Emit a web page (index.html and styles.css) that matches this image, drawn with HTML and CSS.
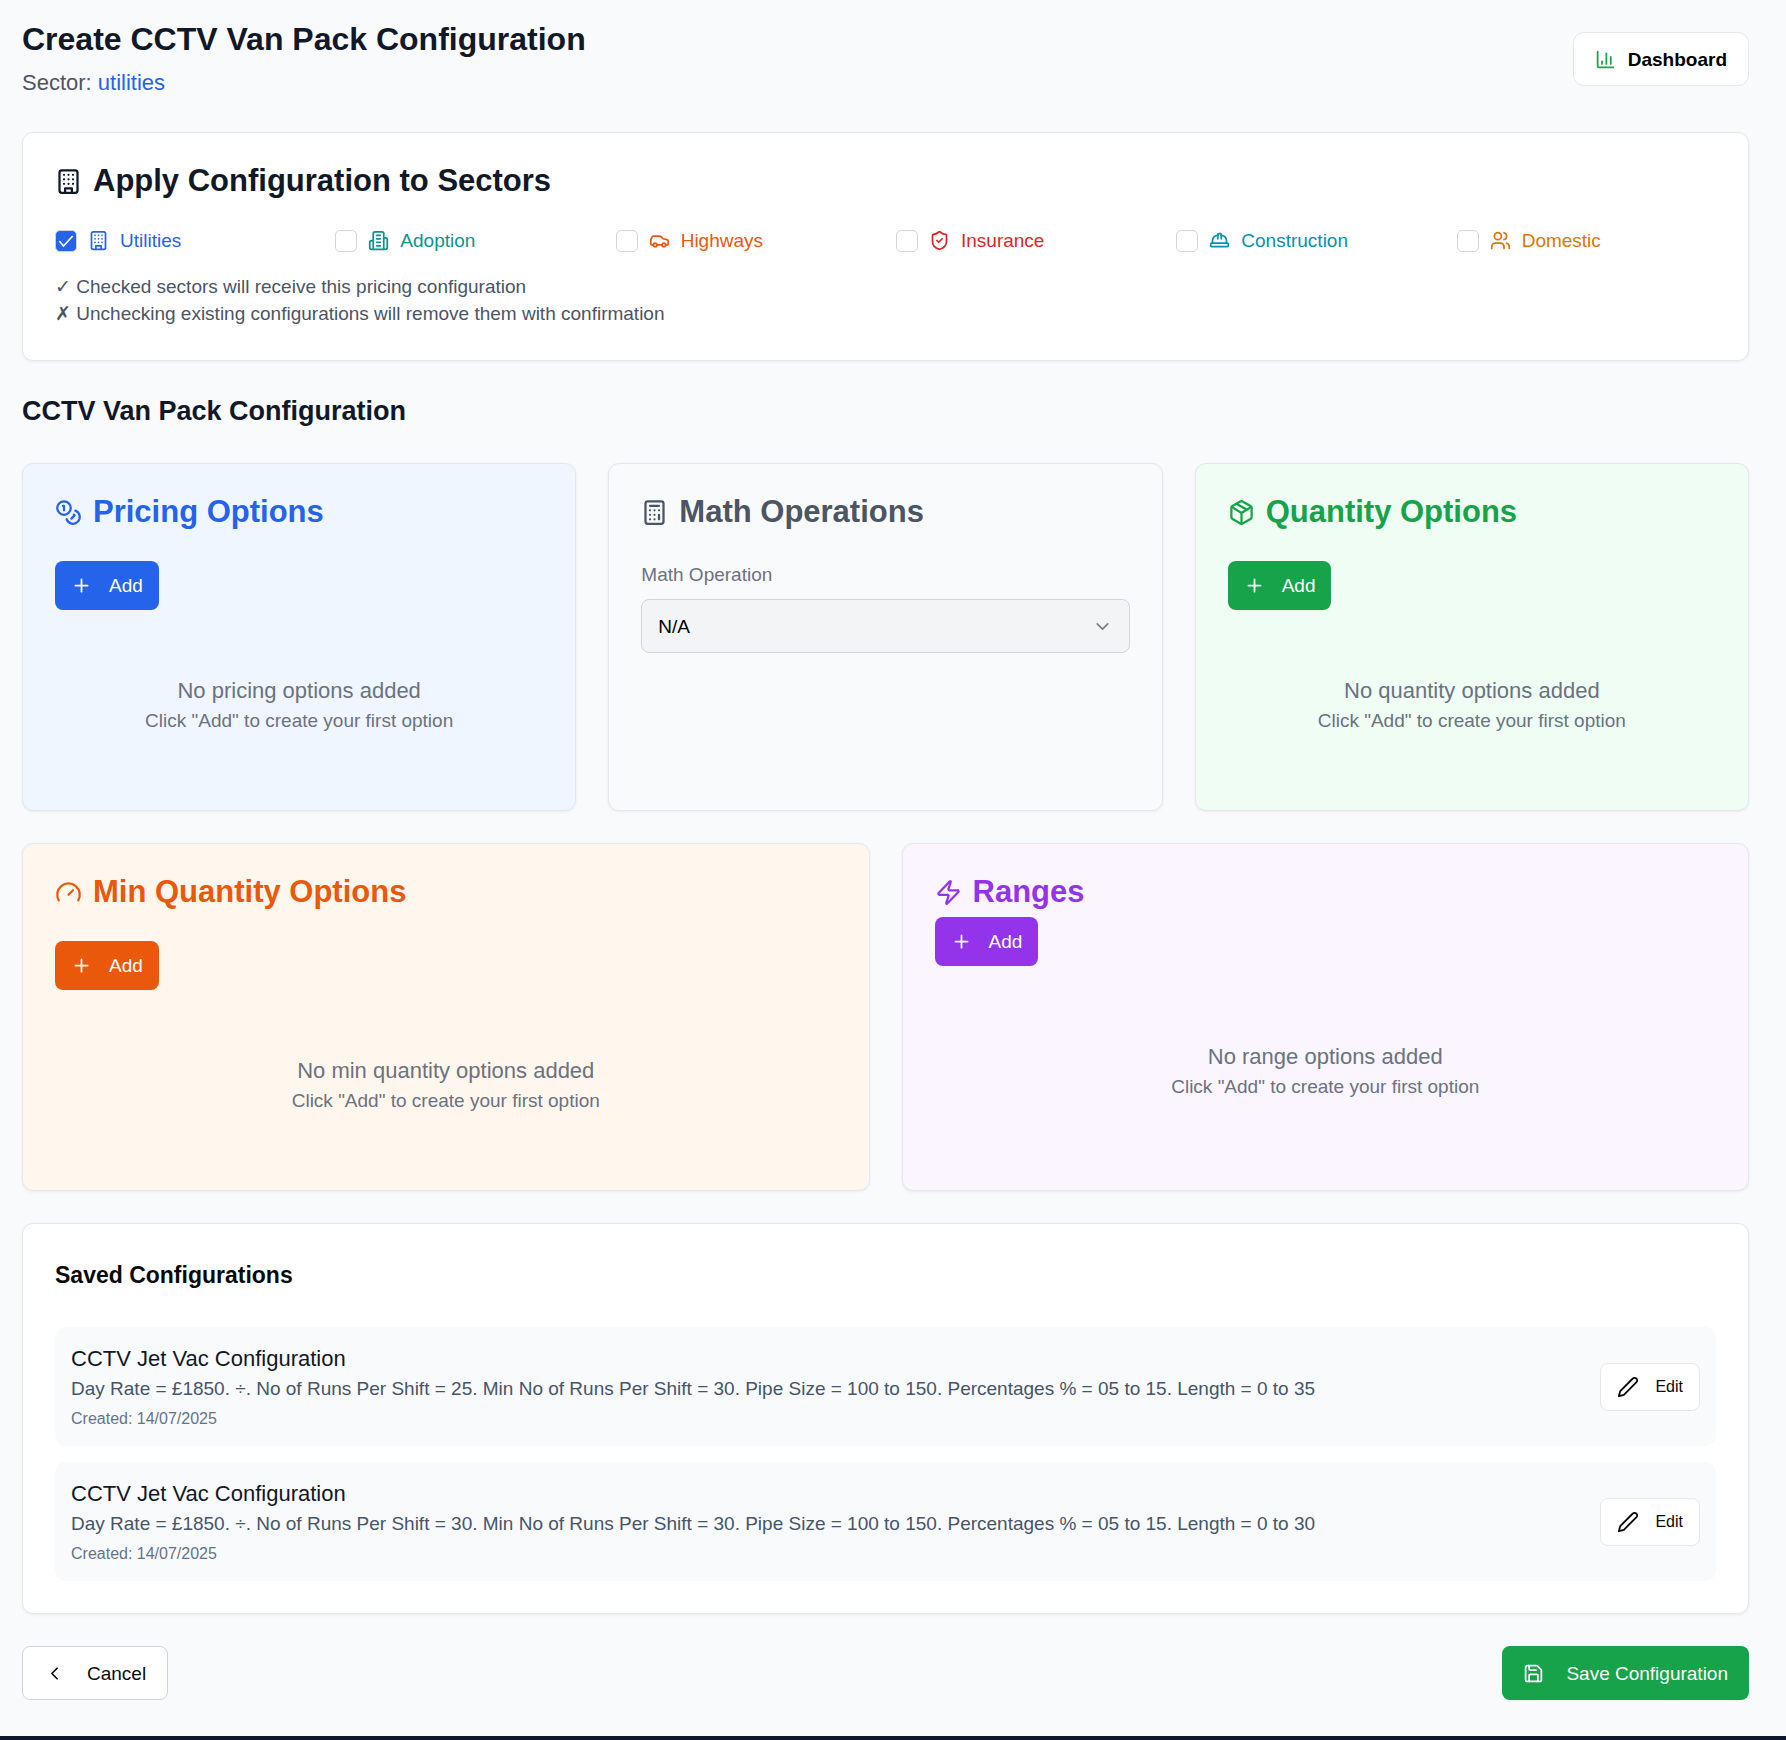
FILE: index.html
```html
<!DOCTYPE html>
<html lang="en">
<head>
<meta charset="utf-8">
<meta name="viewport" content="width=device-width, initial-scale=1">
<title>Create CCTV Van Pack Configuration</title>
<link rel="stylesheet" href="styles.css">
</head>
<body>
<main class="page">
  <header class="page-header">
    <div>
      <h1 class="page-title">Create CCTV Van Pack Configuration</h1>
      <p class="page-sector">Sector: <span class="accent">utilities</span></p>
    </div>
    <button type="button" class="btn btn-dashboard">
      <svg class="icon green" viewBox="0 0 24 24"><path d="M3 3v16a2 2 0 0 0 2 2h16"/><path d="M18 17V9"/><path d="M13 17V5"/><path d="M8 17v-3"/></svg>
      Dashboard
    </button>
  </header>

  <section class="card">
    <h2 class="card-title">
      <svg class="icon icon-lg" viewBox="0 0 24 24"><rect width="16" height="20" x="4" y="2" rx="2"/><path d="M9 22v-4h6v4"/><path d="M8 6h.01M16 6h.01M12 6h.01M12 10h.01M12 14h.01M16 10h.01M16 14h.01M8 10h.01M8 14h.01"/></svg>
      Apply Configuration to Sectors
    </h2>
    <div class="sectors">
      <label class="sector blue">
        <span class="check"><input type="checkbox" checked><svg class="tick" viewBox="0 0 24 24"><path d="M4 12l5 6L20 6"/></svg></span>
        <svg class="icon" viewBox="0 0 24 24"><rect width="16" height="20" x="4" y="2" rx="2"/><path d="M9 22v-4h6v4"/><path d="M8 6h.01M16 6h.01M12 6h.01M12 10h.01M12 14h.01M16 10h.01M16 14h.01M8 10h.01M8 14h.01"/></svg>
        <span>Utilities</span>
      </label>
      <label class="sector teal">
        <span class="check"><input type="checkbox"></span>
        <svg class="icon" viewBox="0 0 24 24"><path d="M6 22V4a2 2 0 0 1 2-2h8a2 2 0 0 1 2 2v18Z"/><path d="M6 12H4a2 2 0 0 0-2 2v6a2 2 0 0 0 2 2h2"/><path d="M18 9h2a2 2 0 0 1 2 2v9a2 2 0 0 1-2 2h-2"/><path d="M10 6h4M10 10h4M10 14h4M10 18h4"/></svg>
        <span>Adoption</span>
      </label>
      <label class="sector orange">
        <span class="check"><input type="checkbox"></span>
        <svg class="icon" viewBox="0 0 24 24"><path d="M19 17h2c.6 0 1-.4 1-1v-3c0-.9-.7-1.7-1.5-1.9C18.7 10.6 16 10 16 10s-1.3-1.4-2.2-2.3c-.5-.4-1.1-.7-1.8-.7H5c-.6 0-1.1.4-1.4.9l-1.4 2.9A3.7 3.7 0 0 0 2 12v4c0 .6.4 1 1 1h2"/><circle cx="7" cy="17" r="2"/><path d="M9 17h6"/><circle cx="17" cy="17" r="2"/></svg>
        <span>Highways</span>
      </label>
      <label class="sector red">
        <span class="check"><input type="checkbox"></span>
        <svg class="icon" viewBox="0 0 24 24"><path d="M20 13c0 5-3.5 7.5-7.66 8.95a1 1 0 0 1-.67-.01C7.5 20.5 4 18 4 13V6a1 1 0 0 1 1-1c2 0 4.5-1.2 6.24-2.72a1.17 1.17 0 0 1 1.52 0C14.51 3.81 17 5 19 5a1 1 0 0 1 1 1z"/><path d="m9 12 2 2 4-4"/></svg>
        <span>Insurance</span>
      </label>
      <label class="sector cyan">
        <span class="check"><input type="checkbox"></span>
        <svg class="icon" viewBox="0 0 24 24"><path d="M2 18a1 1 0 0 0 1 1h18a1 1 0 0 0 1-1v-2a1 1 0 0 0-1-1H3a1 1 0 0 0-1 1v2z"/><path d="M10 10V5a1 1 0 0 1 1-1h2a1 1 0 0 1 1 1v5"/><path d="M4 15v-3a6 6 0 0 1 6-6"/><path d="M14 6a6 6 0 0 1 6 6v3"/></svg>
        <span>Construction</span>
      </label>
      <label class="sector amber">
        <span class="check"><input type="checkbox"></span>
        <svg class="icon" viewBox="0 0 24 24"><path d="M16 21v-2a4 4 0 0 0-4-4H6a4 4 0 0 0-4 4v2"/><circle cx="9" cy="7" r="4"/><path d="M22 21v-2a4 4 0 0 0-3-3.87"/><path d="M16 3.13a4 4 0 0 1 0 7.75"/></svg>
        <span>Domestic</span>
      </label>
    </div>
    <div class="notes">
      <p>✓ Checked sectors will receive this pricing configuration</p>
      <p>✗ Unchecking existing configurations will remove them with confirmation</p>
    </div>
  </section>

  <h2 class="section-title">CCTV Van Pack Configuration</h2>

  <div class="grid grid-3">
    <section class="card card-blue">
      <h3 class="card-title blue">
        <svg class="icon icon-lg" viewBox="0 0 24 24"><circle cx="8" cy="8" r="6"/><path d="M18.09 10.37A6 6 0 1 1 10.34 18"/><path d="M7 6h1v4"/><path d="m16.71 13.88.7.71-2.82 2.82"/></svg>
        Pricing Options
      </h3>
      <button type="button" class="btn btn-add bg-blue"><svg class="icon" viewBox="0 0 24 24"><path d="M5 12h14M12 5v14"/></svg>Add</button>
      <div class="empty">
        <p class="empty-title">No pricing options added</p>
        <p class="empty-hint">Click "Add" to create your first option</p>
      </div>
    </section>

    <section class="card card-gray">
      <h3 class="card-title slate">
        <svg class="icon icon-lg" viewBox="0 0 24 24"><rect width="16" height="20" x="4" y="2" rx="2"/><path d="M8 6h8M16 14v4M16 10h.01M12 10h.01M8 10h.01M12 14h.01M8 14h.01M12 18h.01M8 18h.01"/></svg>
        Math Operations
      </h3>
      <label class="field-label" for="math-operation">Math Operation</label>
      <div class="select">
        <select id="math-operation"><option>N/A</option></select>
        <svg class="icon select-arrow" viewBox="0 0 24 24"><path d="m6 9 6 6 6-6"/></svg>
      </div>
    </section>

    <section class="card card-green">
      <h3 class="card-title green">
        <svg class="icon icon-lg" viewBox="0 0 24 24"><path d="M11 21.73a2 2 0 0 0 2 0l7-4A2 2 0 0 0 21 16V8a2 2 0 0 0-1-1.73l-7-4a2 2 0 0 0-2 0l-7 4A2 2 0 0 0 3 8v8a2 2 0 0 0 1 1.73z"/><path d="M12 22V12"/><path d="m3.3 7 7.703 4.734a2 2 0 0 0 1.994 0L20.7 7"/><path d="m7.5 4.27 9 5.15"/></svg>
        Quantity Options
      </h3>
      <button type="button" class="btn btn-add bg-green"><svg class="icon" viewBox="0 0 24 24"><path d="M5 12h14M12 5v14"/></svg>Add</button>
      <div class="empty">
        <p class="empty-title">No quantity options added</p>
        <p class="empty-hint">Click "Add" to create your first option</p>
      </div>
    </section>
  </div>

  <div class="grid grid-2">
    <section class="card card-orange">
      <h3 class="card-title orange">
        <svg class="icon icon-lg" viewBox="0 0 24 24"><path d="m12 14 4-4"/><path d="M3.34 19a10 10 0 1 1 17.32 0"/></svg>
        Min Quantity Options
      </h3>
      <button type="button" class="btn btn-add bg-orange"><svg class="icon" viewBox="0 0 24 24"><path d="M5 12h14M12 5v14"/></svg>Add</button>
      <div class="empty">
        <p class="empty-title">No min quantity options added</p>
        <p class="empty-hint">Click "Add" to create your first option</p>
      </div>
    </section>

    <section class="card card-purple card-compact">
      <h3 class="card-title purple">
        <svg class="icon icon-lg" viewBox="0 0 24 24"><path d="M4 14a1 1 0 0 1-.78-1.63l9.9-10.2a.5.5 0 0 1 .86.46l-1.92 6.02A1 1 0 0 0 13 10h7a1 1 0 0 1 .78 1.63l-9.9 10.2a.5.5 0 0 1-.86-.46l1.92-6.02A1 1 0 0 0 11 14z"/></svg>
        Ranges
      </h3>
      <button type="button" class="btn btn-add bg-purple"><svg class="icon" viewBox="0 0 24 24"><path d="M5 12h14M12 5v14"/></svg>Add</button>
      <div class="empty">
        <p class="empty-title">No range options added</p>
        <p class="empty-hint">Click "Add" to create your first option</p>
      </div>
    </section>
  </div>

  <section class="card">
    <h2 class="saved-title">Saved Configurations</h2>
    <ul class="saved-list">
      <li class="saved-item">
        <div>
          <h3 class="saved-name">CCTV Jet Vac Configuration</h3>
          <p class="saved-detail">Day Rate = £1850. ÷. No of Runs Per Shift = 25. Min No of Runs Per Shift = 30. Pipe Size = 100 to 150. Percentages % = 05 to 15. Length = 0 to 35</p>
          <p class="saved-date">Created: 14/07/2025</p>
        </div>
        <button type="button" class="btn btn-edit"><svg class="icon" viewBox="0 0 24 24"><path d="M17 3a2.85 2.83 0 1 1 4 4L7.5 20.5 2 22l1.5-5.5Z"/></svg>Edit</button>
      </li>
      <li class="saved-item">
        <div>
          <h3 class="saved-name">CCTV Jet Vac Configuration</h3>
          <p class="saved-detail">Day Rate = £1850. ÷. No of Runs Per Shift = 30. Min No of Runs Per Shift = 30. Pipe Size = 100 to 150. Percentages % = 05 to 15. Length = 0 to 30</p>
          <p class="saved-date">Created: 14/07/2025</p>
        </div>
        <button type="button" class="btn btn-edit"><svg class="icon" viewBox="0 0 24 24"><path d="M17 3a2.85 2.83 0 1 1 4 4L7.5 20.5 2 22l1.5-5.5Z"/></svg>Edit</button>
      </li>
    </ul>
  </section>

  <div class="actions">
    <button type="button" class="btn btn-cancel"><svg class="icon" viewBox="0 0 24 24"><path d="m15 18-6-6 6-6"/></svg>Cancel</button>
    <button type="button" class="btn btn-save bg-green"><svg class="icon" viewBox="0 0 24 24"><path d="M15.2 3a2 2 0 0 1 1.4.6l3.8 3.8a2 2 0 0 1 .6 1.4V19a2 2 0 0 1-2 2H5a2 2 0 0 1-2-2V5a2 2 0 0 1 2-2z"/><path d="M17 21v-7a1 1 0 0 0-1-1H8a1 1 0 0 0-1 1v7"/><path d="M7 3v4a1 1 0 0 0 1 1h7"/></svg>Save Configuration</button>
  </div>
</main>
<footer class="site-footer"></footer>
</body>
</html>
```
FILE: styles.css
```css
*, *::before, *::after { box-sizing: border-box; }

body {
  margin: 0;
  background: #f9fafb;
  color: #111827;
  font-family: "Liberation Sans", Arial, sans-serif;
  font-size: 19px;
  line-height: 27px;
}

h1, h2, h3, p, ul { margin: 0; padding: 0; }
ul { list-style: none; }

.page {
  display: flex;
  flex-direction: column;
  gap: 32px;
  padding: 18px 37px 36px 22px;
}

.site-footer { height: 4px; background: #0f172a; }

/* Colours */
.accent, .blue { color: #2563eb; }
.teal { color: #0d9488; }
.orange { color: #ea580c; }
.red { color: #dc2626; }
.cyan { color: #0891b2; }
.amber { color: #d97706; }
.green { color: #16a34a; }
.slate { color: #4b5563; }
.purple { color: #9333ea; }

/* Icons */
.icon {
  flex: none;
  width: 21px;
  height: 21px;
  fill: none;
  stroke: currentColor;
  stroke-width: 2;
  stroke-linecap: round;
  stroke-linejoin: round;
}
.icon-lg { width: 27px; height: 27px; }

/* Header */
.page-header {
  display: flex;
  align-items: center;
  justify-content: space-between;
}
.page-title { font-size: 32px; line-height: 43px; }
.page-sector {
  margin-top: 5px;
  color: #4b5563;
  font-size: 22px;
  line-height: 34px;
}

/* Buttons */
.btn {
  display: inline-flex;
  flex: none;
  align-items: center;
  justify-content: center;
  border: 0;
  border-radius: 8px;
  color: #fff;
  font: inherit;
  cursor: pointer;
}
.btn-dashboard {
  gap: 12px;
  height: 54px;
  padding: 0 21px;
  border: 1px solid #e5e7eb;
  border-radius: 11px;
  background: #fff;
  color: #000;
  font-weight: 700;
}
.btn-add { gap: 17px; height: 49px; padding: 0 16px; }
.btn-edit {
  gap: 16px;
  height: 48px;
  padding: 0 16px;
  border: 1px solid #e5e7eb;
  background: #fff;
  color: #0a0a0a;
  font-size: 16px;
}
.btn-edit .icon { width: 22px; height: 22px; }
.btn-cancel, .btn-save { gap: 22px; height: 54px; padding: 0 21px; }
.btn-cancel { border: 1px solid #d1d5db; background: #fff; color: #0a0a0a; }

.bg-blue { background: #2563eb; }
.bg-green { background: #16a34a; }
.bg-orange { background: #ea580c; }
.bg-purple { background: #9333ea; }

/* Cards */
.card {
  padding: 32px;
  border: 1px solid #e5e7eb;
  border-radius: 11px;
  background: #fff;
  box-shadow: 0 1px 3px rgba(0, 0, 0, 0.06);
}
.card-blue { background: #eff6ff; }
.card-gray { background: #f9fafb; }
.card-green { background: #f0fdf4; }
.card-orange { background: #fff7ed; }
.card-purple { background: #faf5ff; }

.card-title {
  display: flex;
  align-items: center;
  gap: 11px;
  font-size: 31px;
  line-height: 32px;
}

.grid { display: grid; gap: 32px; }
.grid-3 { grid-template-columns: repeat(3, minmax(0, 1fr)); }
.grid-2 { grid-template-columns: repeat(2, minmax(0, 1fr)); }
.grid .card-title { margin-bottom: 33px; }
.grid .card-compact .card-title { margin-bottom: 9px; }

.empty {
  margin-top: 22px;
  padding: 43px 0;
  color: #6b7280;
  text-align: center;
}
.card-compact .empty { margin-top: 32px; }
.empty-title { font-size: 22px; line-height: 32px; }
.empty-hint { line-height: 28px; }

/* Sector checkboxes */
.sectors {
  display: grid;
  grid-template-columns: repeat(6, minmax(0, 1fr));
  gap: 21px;
  margin-top: 30px;
}
.sector { display: flex; align-items: center; gap: 11px; }
.check { display: grid; flex: none; }
.check input {
  grid-area: 1 / 1;
  width: 22px;
  height: 22px;
  margin: 0;
  border: 1px solid #d1d5db;
  border-radius: 5px;
  background: #fff;
  appearance: none;
}
.check input:checked { background: #2563eb; }
.tick {
  grid-area: 1 / 1;
  place-self: center;
  width: 20px;
  height: 20px;
  fill: none;
  stroke: #fff;
  stroke-width: 2;
  pointer-events: none;
}
.notes { margin-top: 19px; padding-bottom: 1px; color: #4b5563; }

.section-title { padding-bottom: 2px; font-size: 27px; line-height: 36px; }

/* Select field */
.field-label { display: block; color: #6b7280; }
.select { display: grid; align-items: center; margin-top: 11px; }
.select select {
  grid-area: 1 / 1;
  width: 100%;
  height: 54px;
  padding: 0 48px 0 16px;
  border: 1px solid #d1d5db;
  border-radius: 8px;
  background: #f3f4f6;
  color: #000;
  font: inherit;
  appearance: none;
}
.select-arrow {
  grid-area: 1 / 1;
  justify-self: end;
  margin-right: 17px;
  color: #7d7f82;
  pointer-events: none;
}

/* Saved configurations */
.saved-title { color: #0a0a0a; font-size: 23px; line-height: 38px; }
.saved-list { display: grid; gap: 16px; margin-top: 33px; }
.saved-item {
  display: flex;
  align-items: center;
  justify-content: space-between;
  gap: 16px;
  padding: 16px;
  border-radius: 11px;
  background: #f9fafb;
}
.saved-name { font-size: 22px; font-weight: 400; line-height: 32px; }
.saved-detail { color: #475569; }
.saved-date { margin-top: 6px; color: #64748b; font-size: 16px; line-height: 22px; }

.actions { display: flex; justify-content: space-between; }
```
